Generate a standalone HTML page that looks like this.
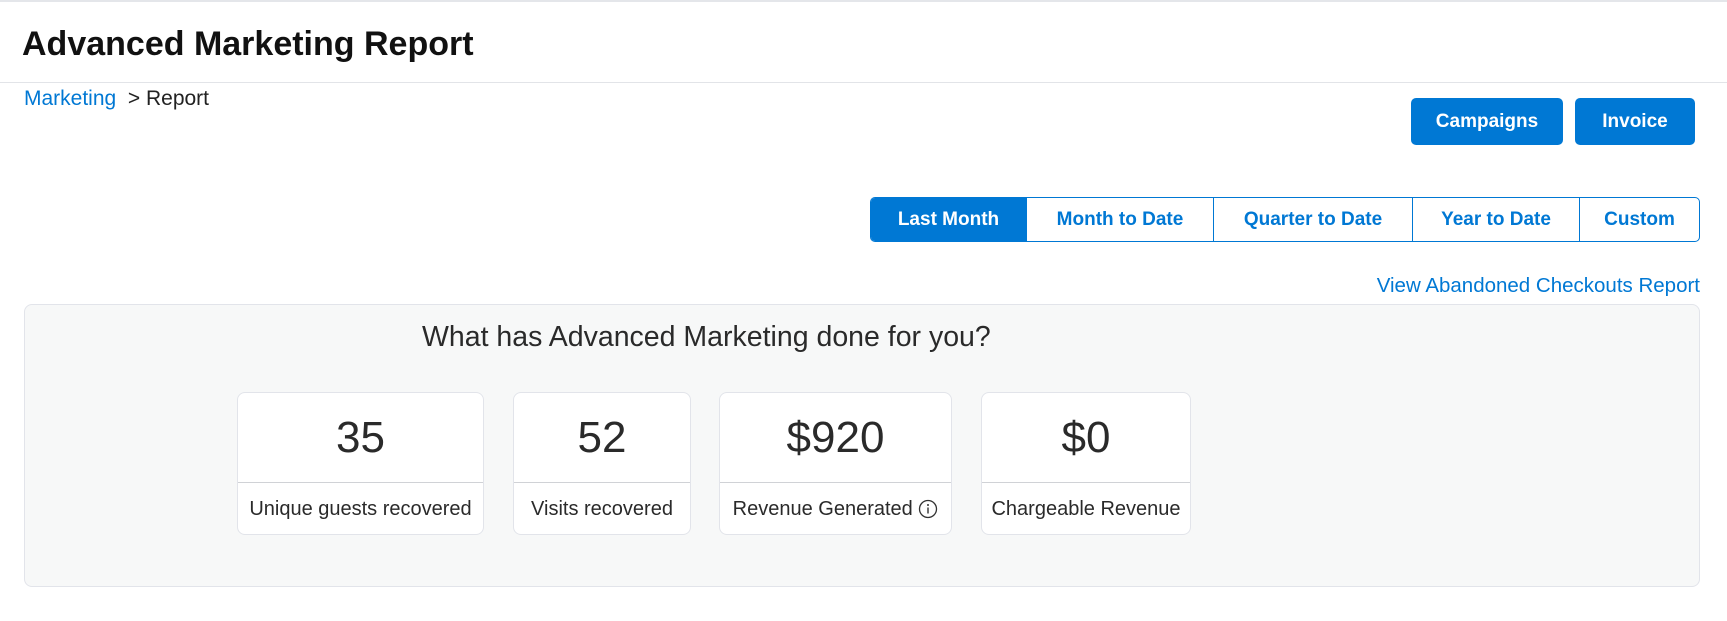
<!DOCTYPE html>
<html><head><meta charset="utf-8"><style>
*{box-sizing:border-box;margin:0;padding:0}
body{width:1727px;height:621px;background:#fff;font-family:"Liberation Sans",sans-serif;color:#222;position:relative;overflow:hidden}
.a{position:absolute}
.blue{color:#0078d4}
.btn{position:absolute;background:#0078d4;color:#fff;border-radius:5px;font-weight:bold;font-size:19px;display:flex;align-items:center;justify-content:center}
.tabs{position:absolute;left:870px;top:197px;width:830px;height:45px;border:1.5px solid #0078d4;border-radius:5px;display:flex;overflow:hidden}
.tabs div{display:flex;align-items:center;justify-content:center;color:#0078d4;font-weight:bold;font-size:19px;border-left:1px solid #0078d4}
.tabs div:first-child{border-left:none;background:#0078d4;color:#fff}
.panel{position:absolute;left:24px;top:304px;width:1676px;height:283px;background:#f7f8f8;border:1px solid #e2e4ea;border-radius:8px}
.card{position:absolute;top:392px;height:143px;background:#fff;border:1px solid #e2e4ea;border-radius:8px}
.card .n{position:absolute;left:0;right:0;top:0;height:90px;display:flex;align-items:center;justify-content:center;font-size:44px;color:#2a2a2a;border-bottom:1px solid #d0d2d6}
.card .l{position:absolute;left:0;right:0;top:90px;height:52px;display:flex;align-items:center;justify-content:center;font-size:20px;color:#2a2a2a;white-space:nowrap}
</style></head><body>
<div class="a" style="left:0;top:0;width:1727px;height:2px;background:#e4e6ea"></div>
<div class="a" style="left:22px;top:25px;font-size:34px;font-weight:bold;color:#111">Advanced Marketing Report</div>
<div class="a" style="left:0;top:82px;width:1727px;height:1px;background:#e2e4e8"></div>
<div class="a" style="left:24px;top:87px;font-size:21px"><span class="blue">Marketing</span>&nbsp; &gt; Report</div>
<div class="btn" style="left:1411px;top:98px;width:152px;height:47px">Campaigns</div>
<div class="btn" style="left:1575px;top:98px;width:120px;height:47px">Invoice</div>
<div class="tabs">
<div style="width:155px">Last Month</div>
<div style="width:187px">Month to Date</div>
<div style="width:199px">Quarter to Date</div>
<div style="width:167px">Year to Date</div>
<div style="flex:1">Custom</div>
</div>
<div class="a blue" style="right:27px;top:274px;font-size:20.5px">View Abandoned Checkouts Report</div>
<div class="panel"></div>
<div class="a" style="left:422px;top:321px;font-size:28.5px;color:#2a2a2a">What has Advanced Marketing done for you?</div>
<div class="card" style="left:237px;width:247px"><div class="n">35</div><div class="l">Unique guests recovered</div></div>
<div class="card" style="left:513px;width:178px"><div class="n">52</div><div class="l">Visits recovered</div></div>
<div class="card" style="left:719px;width:233px"><div class="n">$920</div><div class="l">Revenue Generated&nbsp;<svg width="20" height="20" viewBox="0 0 20 20"><circle cx="10" cy="10" r="8.5" fill="none" stroke="#333" stroke-width="1.3"/><circle cx="10" cy="6" r="1" fill="#333"/><path d="M10 8.5v6" stroke="#333" stroke-width="1.4"/></svg></div></div>
<div class="card" style="left:981px;width:210px"><div class="n">$0</div><div class="l">Chargeable Revenue</div></div>
</body></html>
